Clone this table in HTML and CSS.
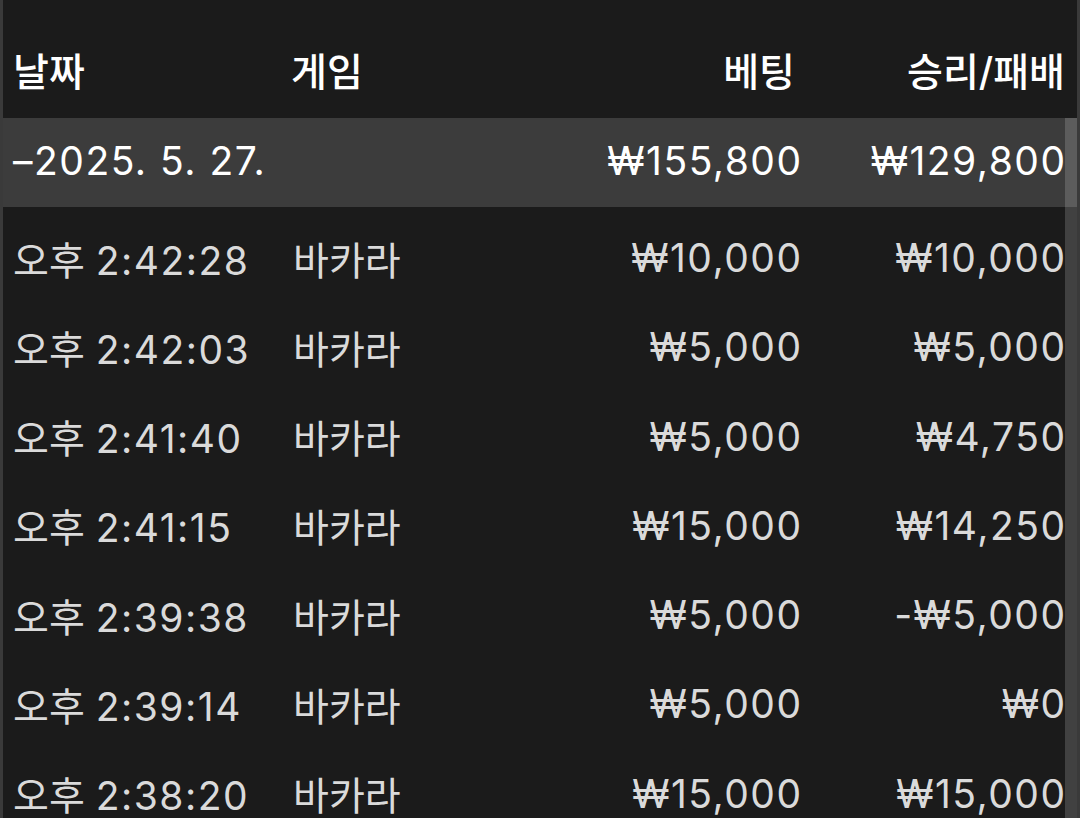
FILE: index.html
```html
<!DOCTYPE html>
<html lang="ko">
<head>
<meta charset="utf-8">
<link rel="stylesheet" href="styles.css">
</head>
<body>
<div class="frame">
  <div class="table">
    <div class="row head">
      <div class="c1">날짜</div>
      <div class="c2">게임</div>
      <div class="c3">베팅</div>
      <div class="c4">승리/패배</div>
    </div>
    <div class="row group">
      <div class="c1"><span class="num">–2025. 5. 27.</span></div>
      <div class="c2"></div>
      <div class="c3"><span class="num">₩155,800</span></div>
      <div class="c4"><span class="num">₩129,800</span></div>
    </div>
    <div class="row item">
      <div class="c1">오후 <span class="num">2:42:28</span></div>
      <div class="c2">바카라</div>
      <div class="c3"><span class="num">₩10,000</span></div>
      <div class="c4"><span class="num">₩10,000</span></div>
    </div>
    <div class="row item">
      <div class="c1">오후 <span class="num">2:42:03</span></div>
      <div class="c2">바카라</div>
      <div class="c3"><span class="num">₩5,000</span></div>
      <div class="c4"><span class="num">₩5,000</span></div>
    </div>
    <div class="row item">
      <div class="c1">오후 <span class="num">2:41:40</span></div>
      <div class="c2">바카라</div>
      <div class="c3"><span class="num">₩5,000</span></div>
      <div class="c4"><span class="num">₩4,750</span></div>
    </div>
    <div class="row item">
      <div class="c1">오후 <span class="num">2:41:15</span></div>
      <div class="c2">바카라</div>
      <div class="c3"><span class="num">₩15,000</span></div>
      <div class="c4"><span class="num">₩14,250</span></div>
    </div>
    <div class="row item">
      <div class="c1">오후 <span class="num">2:39:38</span></div>
      <div class="c2">바카라</div>
      <div class="c3"><span class="num">₩5,000</span></div>
      <div class="c4"><span class="num">-₩5,000</span></div>
    </div>
    <div class="row item">
      <div class="c1">오후 <span class="num">2:39:14</span></div>
      <div class="c2">바카라</div>
      <div class="c3"><span class="num">₩5,000</span></div>
      <div class="c4"><span class="num">₩0</span></div>
    </div>
    <div class="row item">
      <div class="c1">오후 <span class="num">2:38:20</span></div>
      <div class="c2">바카라</div>
      <div class="c3"><span class="num">₩15,000</span></div>
      <div class="c4"><span class="num">₩15,000</span></div>
    </div>
  </div>
  <div class="scroll-track"></div>
</div>
</body>
</html>
```

FILE: styles.css
```css
html, body {
  margin: 0;
  padding: 0;
  background: #1b1b1b;
  height: 100%;
  overflow: hidden;
}

.frame {
  position: relative;
  height: 818px;
  border-left: 3px solid #3a3a3a;
  border-right: 3px solid #3a3a3a;
  background: #1b1b1b;
  font-family: Inter, "Noto Sans CJK KR", sans-serif;
  font-size: 39px;
  color: #dadada;
  overflow: hidden;
}

.table {
  display: flex;
  flex-direction: column;
}

.row {
  display: grid;
  grid-template-columns: 278px 300px 210px 264px;
  align-items: center;
  height: 89.25px;
  padding-left: 10px;
  box-sizing: border-box;
  white-space: nowrap;
}

.row.head {
  height: 118px;
  padding-top: 20px;
  color: #ffffff;
  font-weight: 500;
}

.head .c3 { padding-right: 6px; }
.head .c4 { padding-right: 0; }

.row.group {
  height: 89px;
  padding-bottom: 4px;
  background: #3c3c3c;
  color: #ffffff;
}

.row.item {
  padding-top: 12px;
}

.num {
  letter-spacing: 1.5px;
}

.c3 .num, .c4 .num {
  margin-right: -1.5px;
}

.c2 { padding-left: 2px; }
.c3, .c4 { text-align: right; }

.head .c2 { padding-left: 0; }

.scroll-track {
  position: absolute;
  top: 118px;
  right: 0;
  bottom: 0;
  width: 12px;
  background: rgba(255, 255, 255, 0.17);
}
```
